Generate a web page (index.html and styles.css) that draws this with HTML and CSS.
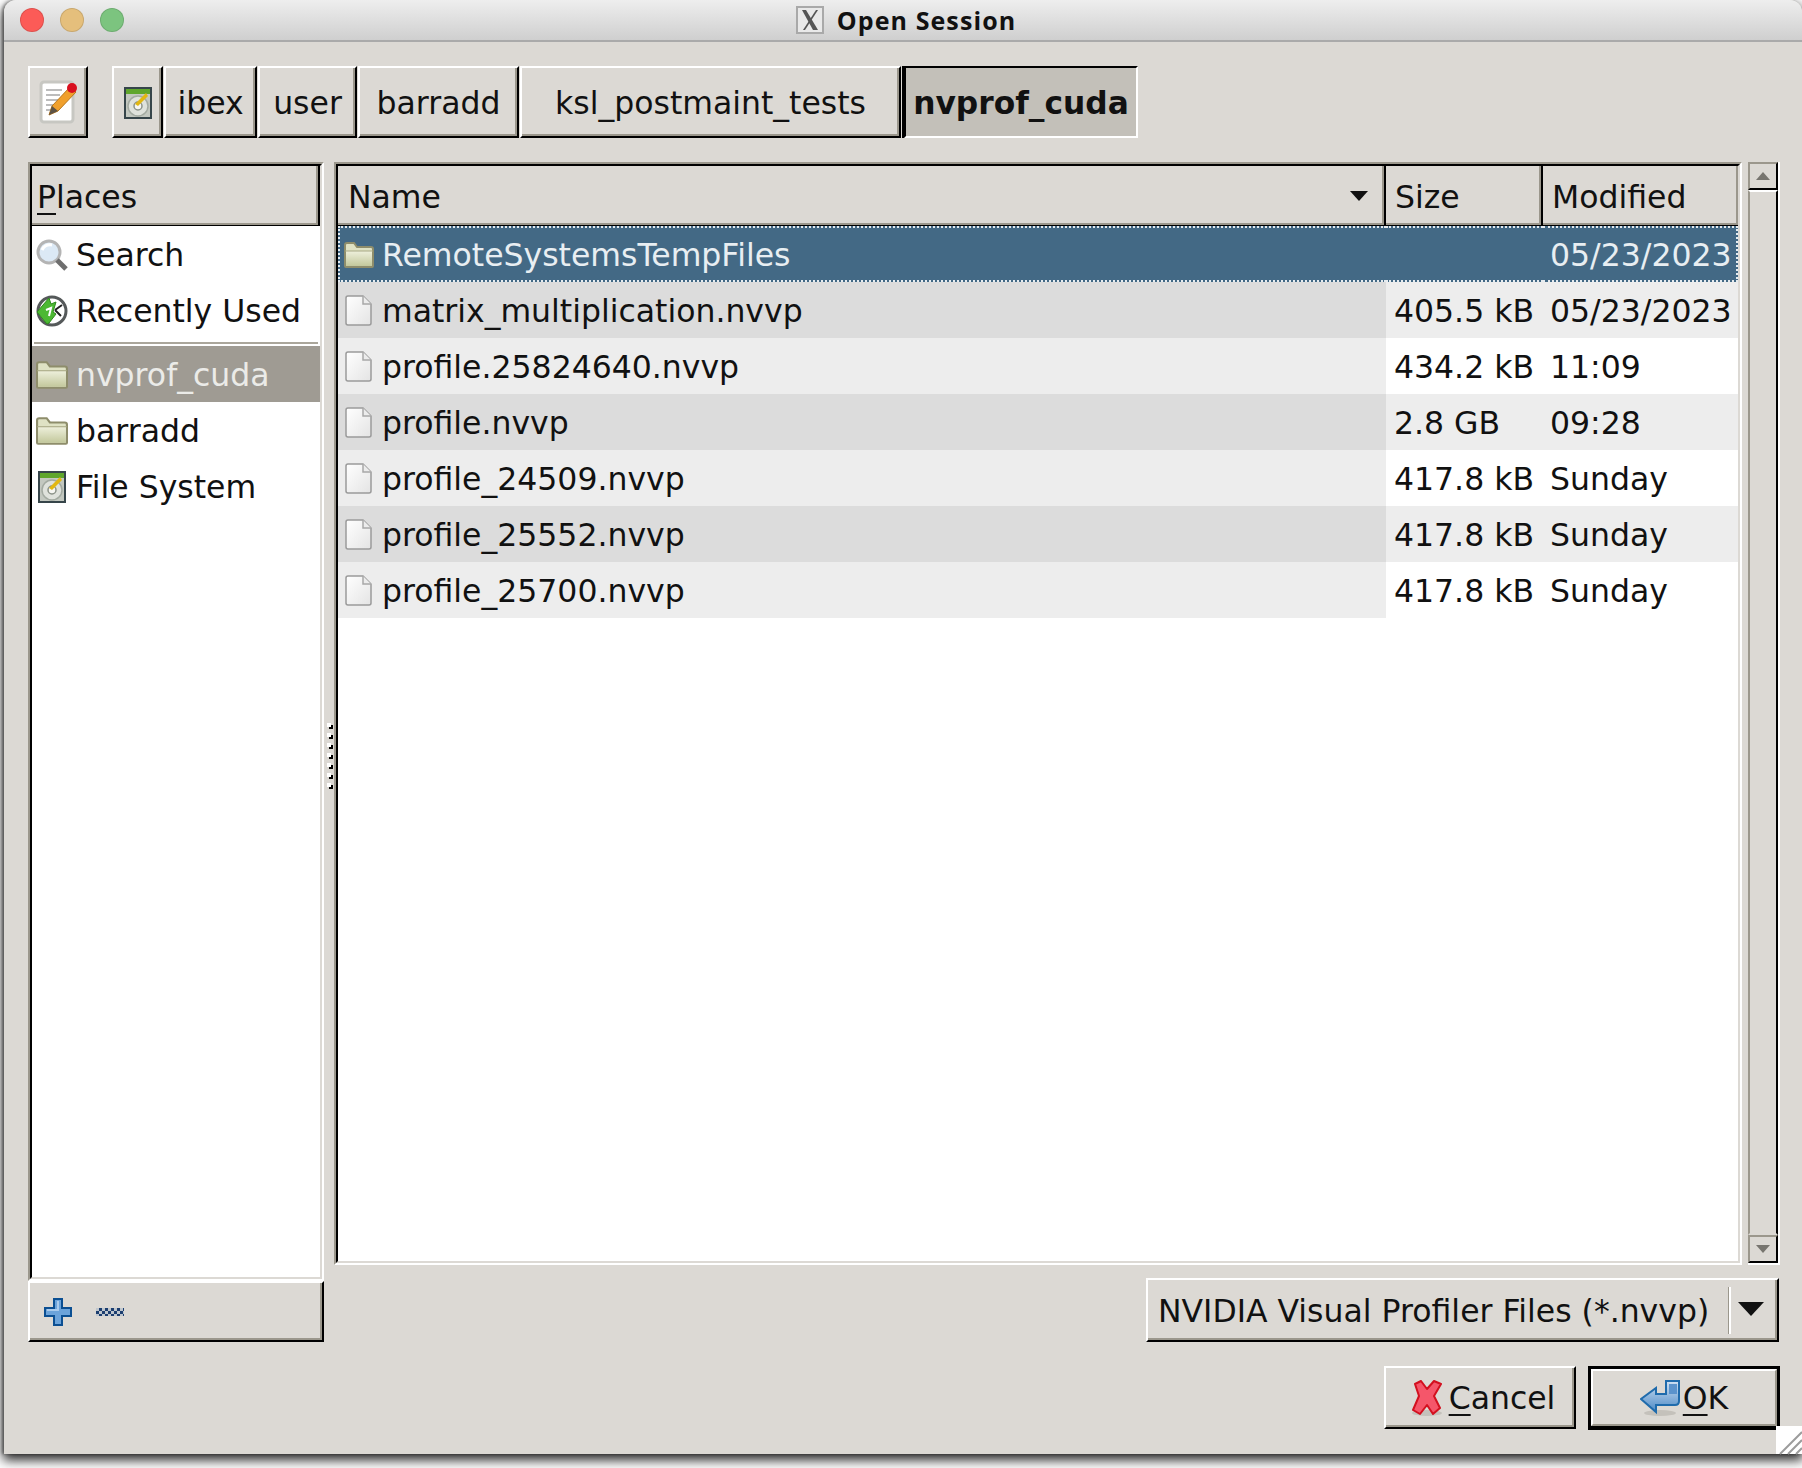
FILE: index.html
```html
<!DOCTYPE html>
<html lang="en">
<head>
  <meta charset="UTF-8">
  <title>Open Session</title>
  <link rel="stylesheet" href="styles.css">
</head>
<body>
  <svg class="defs" xmlns="http://www.w3.org/2000/svg">
    <defs>
      <linearGradient id="folderFill" x1="0" y1="0" x2="0" y2="1">
        <stop offset="0" stop-color="#eef0dc"/>
        <stop offset="1" stop-color="#c3c89c"/>
      </linearGradient>
      <linearGradient id="fileFill" x1="0" y1="0" x2="1" y2="1">
        <stop offset="0" stop-color="#ffffff"/>
        <stop offset="1" stop-color="#e4e4e4"/>
      </linearGradient>
      <linearGradient id="arrowFill" x1="0" y1="0" x2="0" y2="1">
        <stop offset="0" stop-color="#cfe0f2"/>
        <stop offset="1" stop-color="#4d8ac6"/>
      </linearGradient>
      <symbol id="folder" viewBox="0 0 30 26">
        <path d="M1 24V3q0-2 2-2h7l3 4h14q2 0 2 2v17q0 1-1 1H2q-1 0-1-1z" fill="#dfe2c4" stroke="#8e8d6b" stroke-width="2"/>
        <rect x="2" y="9" width="26" height="15" fill="url(#folderFill)"/>
        <path d="M1 9h28" stroke="#a7a883" stroke-width="1"/>
      </symbol>
      <symbol id="file" viewBox="0 0 28 31">
        <path d="M2 3q0-2 2-2h15l8 8v19q0 2-2 2H4q-2 0-2-2z" fill="url(#fileFill)" stroke="#9a9a9a" stroke-width="1.5"/>
        <path d="M19 1v8h8" fill="#ececec" stroke="#a8a8a8" stroke-width="1.5"/>
      </symbol>
      <symbol id="hdd" viewBox="0 0 28 32">
        <rect x="1" y="1" width="26" height="30" fill="#c3c8c0" stroke="#36454a" stroke-width="2"/>
        <rect x="2" y="2" width="24" height="5" fill="#5fa62c"/>
        <circle cx="14" cy="19" r="10" fill="#dfe2dc" stroke="#a3aaa1" stroke-width="1.5"/>
        <circle cx="14" cy="19" r="4" fill="#f6f6f2" stroke="#8b9288" stroke-width="1.5"/>
        <path d="M11 17l11-11 2 3-10 10z" fill="#e2b711"/>
      </symbol>
      <symbol id="edit" viewBox="0 0 38 44">
        <rect x="2" y="2" width="32" height="40" rx="3" fill="#fff" stroke="#c7c7c2" stroke-width="3"/>
        <path d="M7 10h16M7 15h14M7 20h12M7 25h10M7 30h6" stroke="#bcbcbc" stroke-width="2"/>
        <path d="M10 35l3-9 18-19 6 5-18 19z" fill="#f0a02c" stroke="#b9771a" stroke-width="1"/>
        <path d="M10 35l3-9 6 5z" fill="#5d5346"/>
        <circle cx="33" cy="8" r="5" fill="#d9101f"/>
      </symbol>
      <symbol id="search" viewBox="0 0 32 32">
        <circle cx="13" cy="13" r="11" fill="#dce9f5" stroke="#b4b4b4" stroke-width="3"/>
        <path d="M6 11q3-6 10-5" stroke="#fff" stroke-width="3" fill="none"/>
        <path d="M21 21l9 9" stroke="#6e6e6e" stroke-width="5"/>
      </symbol>
      <symbol id="recent" viewBox="0 0 32 32">
        <circle cx="16" cy="16" r="14" fill="#fff" stroke="#55595a" stroke-width="3"/>
        <path d="M19 15l7-5M19 15l6 6" stroke="#222" stroke-width="2"/>
        <path d="M1 17L13 3l2 6 5-2-3 10 3 2-7 9-2 1z" fill="#4cb833" stroke="#2e8a1c" stroke-width="1"/>
        <path d="M10 15l5-2-2 8" stroke="#fff" stroke-width="2" fill="none"/>
      </symbol>
      <symbol id="plus" viewBox="0 0 28 28">
        <path d="M10 1h8v9h9v8h-9v9h-8v-9H1v-8h9z" fill="#6ba3da" stroke="#0b4f92" stroke-width="2"/>
        <path d="M3 12h11V3" fill="none" stroke="#a9cbec" stroke-width="2"/>
      </symbol>
      <symbol id="cancel" viewBox="0 0 32 36">
        <ellipse cx="16" cy="33" rx="15" ry="3" fill="#c4c1bb"/>
        <path d="M4 4l6-3 6 8 7-8 7 3-7 12 6 12-7 6-6-9-7 9-7-4 6-14z" fill="#f5566a" stroke="#d3101f" stroke-width="2" stroke-linejoin="round"/>
      </symbol>
      <symbol id="okArrow" viewBox="0 0 40 36">
        <ellipse cx="20" cy="33" rx="16" ry="3" fill="#c4c1bb"/>
        <path d="M26 1h13v20q0 4-4 4H16v7L1 19 16 8v6h10z" fill="url(#arrowFill)" stroke="#1f6bac" stroke-width="2"/>
        <rect x="29" y="4" width="8" height="10" fill="#5b93cc"/>
      </symbol>
      <symbol id="xlogo" viewBox="0 0 28 28">
        <rect x="1" y="1" width="26" height="26" fill="#e9e9e9" stroke="#a9a9a9" stroke-width="2"/>
        <path d="M6 4h4l12 20h-5z" fill="#555"/>
        <path d="M20 4h2L9 24H7z" fill="#555"/>
      </symbol>
    </defs>
  </svg>

  <div class="window">
    <header class="titlebar">
      <div class="lights">
        <span class="light light-red"></span>
        <span class="light light-yellow"></span>
        <span class="light light-green"></span>
      </div>
      <div class="title">
        <svg class="title-logo"><use href="#xlogo"/></svg>
        <span>Open Session</span>
      </div>
    </header>

    <div class="content">
      <div class="toolbar">
        <button class="btn edit-btn"><svg class="ico-edit"><use href="#edit"/></svg></button>
        <div class="pathbar">
          <button class="btn crumb crumb-root"><svg class="ico-hdd"><use href="#hdd"/></svg></button>
          <button class="btn crumb crumb-ibex">ibex</button>
          <button class="btn crumb crumb-user">user</button>
          <button class="btn crumb crumb-barradd">barradd</button>
          <button class="btn crumb crumb-ksl">ksl_postmaint_tests</button>
          <button class="crumb crumb-active">nvprof_cuda</button>
        </div>
      </div>

      <div class="panes">
        <div class="places-col">
          <div class="frame places-frame">
            <div class="frame-in">
              <div class="places-head"><span><u>P</u>laces</span></div>
              <div class="place"><svg class="place-ico"><use href="#search"/></svg>Search</div>
              <div class="place"><svg class="place-ico"><use href="#recent"/></svg>Recently Used</div>
              <div class="place-sep"></div>
              <div class="place place-on"><svg class="place-ico"><use href="#folder"/></svg>nvprof_cuda</div>
              <div class="place"><svg class="place-ico"><use href="#folder"/></svg>barradd</div>
              <div class="place"><svg class="place-ico"><use href="#hdd"/></svg>File System</div>
            </div>
          </div>
          <div class="btn places-bar">
            <svg class="ico-plus"><use href="#plus"/></svg>
            <span class="ico-minus"></span>
          </div>
        </div>

        <div class="handle">
          <i></i><i></i><i></i><i></i><i></i><i></i><i></i>
        </div>

        <div class="files-col">
          <div class="files-top">
            <div class="frame files-frame">
              <div class="frame-in">
                <table class="files">
                  <colgroup>
                    <col class="col-name">
                    <col class="col-size">
                    <col class="col-mod">
                  </colgroup>
                  <thead>
                    <tr>
                      <th class="th-first"><div class="th-name">Name<span class="sort-arrow"></span></div></th>
                      <th>Size</th>
                      <th class="th-last">Modified</th>
                    </tr>
                  </thead>
                  <tbody>
                    <tr class="sel">
                      <td><div class="fname"><svg class="ico-folder"><use href="#folder"/></svg>RemoteSystemsTempFiles</div></td>
                      <td></td>
                      <td>05/23/2023</td>
                    </tr>
                    <tr class="odd">
                      <td><div class="fname"><svg class="ico-file"><use href="#file"/></svg>matrix_multiplication.nvvp</div></td>
                      <td>405.5 kB</td>
                      <td>05/23/2023</td>
                    </tr>
                    <tr>
                      <td><div class="fname"><svg class="ico-file"><use href="#file"/></svg>profile.25824640.nvvp</div></td>
                      <td>434.2 kB</td>
                      <td>11:09</td>
                    </tr>
                    <tr class="odd">
                      <td><div class="fname"><svg class="ico-file"><use href="#file"/></svg>profile.nvvp</div></td>
                      <td>2.8 GB</td>
                      <td>09:28</td>
                    </tr>
                    <tr>
                      <td><div class="fname"><svg class="ico-file"><use href="#file"/></svg>profile_24509.nvvp</div></td>
                      <td>417.8 kB</td>
                      <td>Sunday</td>
                    </tr>
                    <tr class="odd">
                      <td><div class="fname"><svg class="ico-file"><use href="#file"/></svg>profile_25552.nvvp</div></td>
                      <td>417.8 kB</td>
                      <td>Sunday</td>
                    </tr>
                    <tr>
                      <td><div class="fname"><svg class="ico-file"><use href="#file"/></svg>profile_25700.nvvp</div></td>
                      <td>417.8 kB</td>
                      <td>Sunday</td>
                    </tr>
                  </tbody>
                </table>
              </div>
            </div>
            <div class="scrollbar">
              <div class="sb-btn sb-up"><span class="sb-tri-up"></span></div>
              <div class="sb-thumb"></div>
              <div class="sb-btn sb-down"><span class="sb-tri-down"></span></div>
            </div>
          </div>

          <div class="filter-row">
            <div class="btn filter">
              <span class="filter-text">NVIDIA Visual Profiler Files (*.nvvp)</span>
              <span class="filter-sep"></span>
              <span class="filter-arrow"></span>
            </div>
          </div>
        </div>
      </div>

      <div class="actions">
        <button class="btn action action-cancel"><svg class="ico-cancel"><use href="#cancel"/></svg><span><u>C</u>ancel</span></button>
        <div class="ok-ring">
          <button class="btn action action-ok"><svg class="ico-ok"><use href="#okArrow"/></svg><span><u>O</u>K</span></button>
        </div>
      </div>
    </div>

    <div class="grip">
      <svg width="26" height="28"><path d="M4 27L26 5M12 27L26 13M20 27l6-6" stroke="#9c9c9c" stroke-width="2"/></svg>
    </div>
  </div>
</body>
</html>
```

FILE: styles.css
```css
* {
  box-sizing: border-box;
}
html, body {
  margin: 0;
  height: 1468px;
  overflow: hidden;
}
body {
  background: #fff;
  font-family: "DejaVu Sans", sans-serif;
  font-size: 31.5px;
  color: #111;
}
.defs {
  display: block;
  width: 0;
  height: 0;
}
u {
  text-decoration-thickness: 2px;
  text-underline-offset: 5px;
}

.window {
  position: relative;
  width: 1798px;
  height: 1454px;
  margin-left: 4px;
  background: #dcd9d4;
  border-radius: 12px 12px 0 0;
  box-shadow: 0 5px 12px 1px rgba(0, 0, 0, 0.85), -2px 0 3px rgba(0, 0, 0, 0.35);
}

/* title bar */
.titlebar {
  position: relative;
  display: flex;
  align-items: center;
  justify-content: center;
  height: 42px;
  border-bottom: 2px solid #aaa;
  border-radius: 12px 12px 0 0;
  background: linear-gradient(#eeeeee, #cfcfcf);
}
.lights {
  position: absolute;
  left: 16px;
  top: 8px;
  display: flex;
  gap: 16px;
}
.light {
  width: 24px;
  height: 24px;
  border-radius: 50%;
  border: 1px solid rgba(0, 0, 0, 0.12);
}
.light-red { background: #fc5b57; }
.light-yellow { background: #e5bf7c; }
.light-green { background: #7cc47f; }
.title {
  display: flex;
  align-items: center;
  gap: 13px;
  padding-left: 6px;
  font-family: "Open Sans", sans-serif;
  font-weight: 700;
  font-size: 25px;
  letter-spacing: 1.1px;
  color: #111;
}
.title-logo {
  width: 28px;
  height: 28px;
}

.content {
  padding: 24px 22px 0 24px;
}

/* raised gtk bevel */
.btn {
  border: 2px solid;
  border-color: #fff #000 #000 #fff;
  box-shadow: inset -2px -2px 0 #9b978c;
  background: #dcd9d4;
}
button {
  font: inherit;
  color: inherit;
  padding: 0;
}

/* path bar */
.toolbar {
  display: flex;
  gap: 24px;
  height: 72px;
}
.edit-btn {
  width: 60px;
  display: flex;
  align-items: center;
  justify-content: center;
}
.ico-edit {
  width: 38px;
  height: 44px;
}
.pathbar {
  display: flex;
}
.crumb {
  height: 72px;
  display: flex;
  align-items: center;
  justify-content: center;
  margin-right: 1px;
  padding-top: 2px;
}
.crumb-root { width: 51px; }
.crumb-ibex { width: 93px; }
.crumb-user { width: 99px; }
.crumb-barradd { width: 161px; }
.crumb-ksl { width: 381px; margin-right: 3px; }
.crumb-active {
  width: 234px;
  font-weight: 700;
  font-size: 31.3px;
  background: #c3c0b9;
  border: 2px solid;
  border-color: #000 #fff #fff #000;
  box-shadow: -2px 0 0 #000;
}
.ico-hdd {
  width: 28px;
  height: 32px;
}

/* panes */
.panes {
  display: flex;
  margin-top: 24px;
  height: 1180px;
}
.places-col {
  width: 296px;
  display: flex;
  flex-direction: column;
}
.frame {
  border: 2px solid;
  border-color: #9b978c #fff #fff #9b978c;
}
.frame-in {
  height: 100%;
  border: 2px solid;
  border-color: #000 #dcd9d4 #dcd9d4 #000;
  background: #fff;
}
.places-frame {
  height: 1119px;
}
.places-head {
  display: flex;
  align-items: center;
  height: 60px;
  padding: 2px 0 0 5px;
  background: #dcd9d4;
  border-bottom: 1px solid #000;
  border-right: 2px solid #000;
  box-shadow: inset -2px -2px 0 #9b978c;
}
.place {
  display: flex;
  align-items: center;
  gap: 8px;
  height: 56px;
  padding: 1px 0 0 4px;
}
.place-ico {
  width: 32px;
  height: 32px;
  flex: none;
}
.place-sep {
  height: 8px;
  margin: 0 2px;
  border-top: 2px solid #aaa69b;
  position: relative;
  top: 4px;
}
.place-on {
  background: #9f9b93;
  color: #ebebe8;
}
.places-bar {
  height: 61px;
  flex: none;
  display: flex;
  align-items: center;
  gap: 24px;
  padding-left: 14px;
}
.ico-plus {
  width: 28px;
  height: 28px;
}
.ico-minus {
  width: 28px;
  height: 8px;
  background: repeating-conic-gradient(#1d3f70 0 25%, #bfc6cd 0 50%) 0 0 / 6px 6px;
}

.handle {
  width: 10px;
  height: 1180px;
  display: flex;
  flex-direction: column;
  justify-content: center;
  align-items: center;
  gap: 6px;
  margin-top: 3px;
}
.handle i {
  display: block;
  width: 4px;
  height: 4px;
  background: #fff;
  box-shadow: 2px 2px 0 #000;
}

/* file list */
.files-col {
  width: 1446px;
}
.files-top {
  display: flex;
  gap: 6px;
  height: 1103px;
}
.files-frame {
  width: 1408px;
}
.files {
  width: 1400px;
  table-layout: fixed;
  border-collapse: separate;
  border-spacing: 0;
}
.col-name { width: 1048px; }
.col-size { width: 157px; }
.col-mod { width: 195px; }
.files th {
  height: 60px;
  padding: 2px 0 0 9px;
  text-align: left;
  font-weight: 400;
  background: #dcd9d4;
  border-bottom: 1px solid #000;
  border-right: 2px solid #000;
  box-shadow: inset -2px -2px 0 #9b978c;
}
.files th.th-first {
  padding-left: 10px;
}
.files th.th-last {
  border-right: 0;
}
.th-name {
  display: flex;
  align-items: center;
  justify-content: space-between;
  padding-right: 16px;
}
.sort-arrow {
  width: 0;
  height: 0;
  margin-top: -2px;
  border-left: 9px solid transparent;
  border-right: 9px solid transparent;
  border-top: 10px solid #111;
}
.files td {
  height: 56px;
  padding: 1px 0 0 8px;
  white-space: nowrap;
  overflow: hidden;
  background: #fff;
}
.files td:last-child {
  padding-left: 7px;
}
.files td:first-child {
  background: #ededed;
  padding-left: 6px;
}
.files .odd td {
  background: #ededed;
}
.files .odd td:first-child {
  background: #dcdcdc;
}
.files .sel td,
.files .sel td:first-child {
  background: #436985;
  color: #e8eef2;
  border-top: 2px dotted #e6ecf0;
  border-bottom: 2px dotted #e6ecf0;
}
.files .sel td:first-child {
  border-left: 2px dotted #e6ecf0;
  padding-left: 4px;
}
.files .sel td:last-child {
  border-right: 2px dotted #e6ecf0;
}
.fname {
  display: flex;
  align-items: center;
  gap: 9px;
}
.sel .fname {
  gap: 8px;
}
.ico-folder {
  width: 30px;
  height: 26px;
  flex: none;
}
.ico-file {
  width: 28px;
  height: 31px;
  flex: none;
  margin-right: 1px;
}

/* scrollbar */
.scrollbar {
  width: 32px;
  display: flex;
  flex-direction: column;
  border-right: 2px solid #fff;
  border-bottom: 2px solid #fff;
}
.sb-btn {
  height: 28px;
  flex: none;
  display: flex;
  align-items: center;
  justify-content: center;
  border: 2px solid;
  border-color: #9b978c #000 #000 #9b978c;
}
.sb-thumb {
  flex: 1;
  border: 2px solid;
  border-color: #fff #000 transparent #9b978c;
}
.sb-tri-up,
.sb-tri-down {
  width: 0;
  height: 0;
  border-left: 7px solid transparent;
  border-right: 7px solid transparent;
}
.sb-tri-up { border-bottom: 8px solid #77756f; }
.sb-tri-down { border-top: 8px solid #77756f; }

/* filter combo */
.filter-row {
  display: flex;
  justify-content: flex-end;
  margin-top: 13px;
  padding-right: 1px;
}
.filter {
  width: 633px;
  height: 64px;
  display: flex;
  align-items: center;
  padding: 1px 0 0 10px;
}
.filter-text {
  flex: 1;
  white-space: nowrap;
}
.filter-sep {
  width: 2px;
  height: 47px;
  background: #fff;
  box-shadow: -1px 0 0 #9b978c;
}
.filter-arrow {
  width: 0;
  height: 0;
  margin: -4px 13px 0 7px;
  border-left: 13px solid transparent;
  border-right: 13px solid transparent;
  border-top: 14px solid #111;
}

/* dialog buttons */
.actions {
  display: flex;
  justify-content: flex-end;
  align-items: flex-start;
  gap: 12px;
  margin-top: 24px;
}
.action {
  width: 192px;
  height: 63px;
  display: flex;
  align-items: center;
  justify-content: center;
  gap: 5px;
}
.action-cancel {
  padding-left: 6px;
  gap: 6px;
}
.ok-ring {
  border: 3px solid #000;
  border-bottom-width: 4px;
  height: 64px;
}
.action-ok {
  width: 186px;
  height: 57px;
  gap: 3px;
  border-right-color: #9b978c;
  border-bottom-color: #9b978c;
  box-shadow: none;
}
.ico-cancel {
  width: 32px;
  height: 36px;
}
.ico-ok {
  width: 40px;
  height: 36px;
}

.grip {
  position: absolute;
  right: 0;
  bottom: 0;
  width: 26px;
  height: 28px;
  background: #fff;
}
```
